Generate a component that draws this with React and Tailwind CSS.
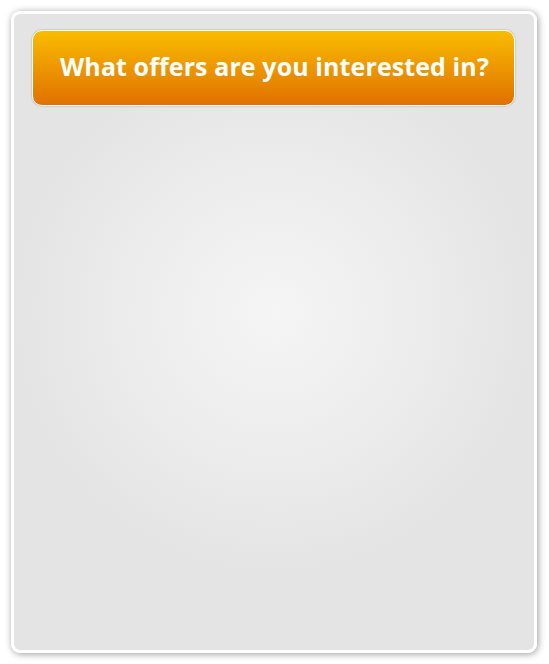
export default function App() {
  return (
    <div className="w-[549px] h-[664px] bg-white pt-[11px] pl-[11px]">
      <div className="w-[526px] h-[642px] rounded-[9px] border-[3px] border-white shadow-[1px_1px_7px_rgba(0,0,0,0.4)] bg-[radial-gradient(circle_at_50%_47%,#f5f5f5_0px,#ececec_150px,#e4e4e4_260px)] pt-[16px] pl-[18px]">
        <div className="w-[483px] h-[76px] rounded-[10px] border-[1.5px] border-white shadow-[0_0_1.5px_rgba(0,0,0,0.45)] bg-[linear-gradient(to_bottom,#f9bc00,#e07100)] flex items-center justify-center">
          <span
            className="text-white font-bold text-[25px] tracking-[0.1px] leading-none pb-[3px] pl-[2px]"
            style={{ fontFamily: '"Open Sans", "Liberation Sans", sans-serif' }}
          >
            What offers are you interested in?
          </span>
        </div>
      </div>
    </div>
  );
}
